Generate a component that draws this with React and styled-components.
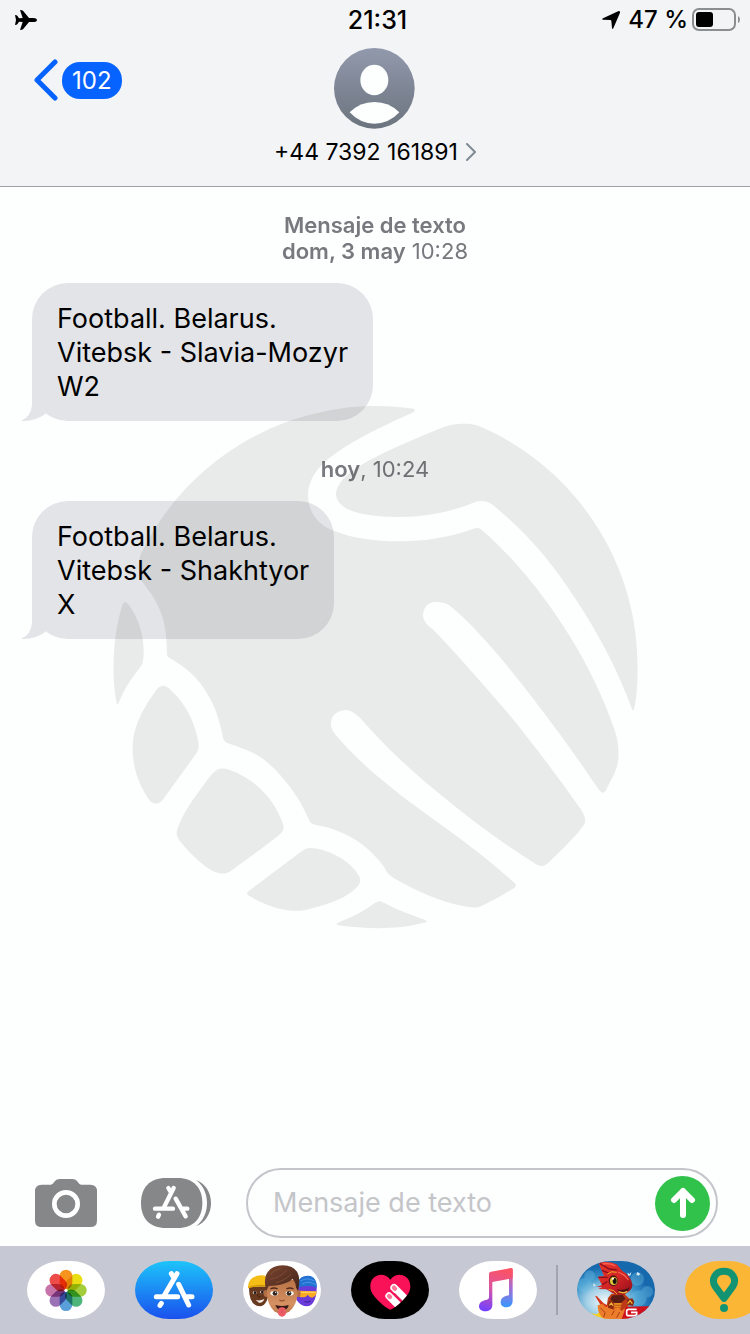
import React from "react";
import styled, { createGlobalStyle } from "styled-components";

const messages = [
  {
    id: 1,
    service: "Mensaje de texto",
    day: "dom, 3 may",
    time: " 10:28",
    lines: ["Football. Belarus.", "Vitebsk - Slavia-Mozyr", "W2"],
  },
  {
    id: 2,
    day: "hoy",
    time: ", 10:24",
    lines: ["Football. Belarus.", "Vitebsk - Shakhtyor", "X"],
  },
];

const PlaneIcon = () => (
  <svg width="22" height="20" viewBox="0 0 66 60" aria-hidden="true">
    <path d="M66 30Q65 36 55 36H42L24 58Q22 60 15 60L23 36L12 35L7 43Q5 45 0 45L3 30L0 15Q5 15 7 17L12 25L23 24L15 0Q22 0 24 2L42 24H55Q65 24 66 30Z" />
  </svg>
);

const LocationIcon = () => (
  <svg width="18" height="18" viewBox="0 0 54 54" aria-hidden="true">
    <path d="M50 0Q55 0 54 5L34 52Q31 56 30 51L28 29Q27 27 25 27L3 26Q-2 25 3 22Z" />
  </svg>
);

const BatteryIcon = () => (
  <svg width="48" height="23" viewBox="0 0 48 23" aria-hidden="true">
    <rect x="1" y="1" width="42" height="21" rx="6" fill="none" stroke="#8c8d8f" strokeWidth="2" />
    <rect x="4" y="4" width="17" height="15" rx="3" />
    <path d="M46 8Q48 9 48 11.500Q48 14 46 15Z" fill="#8c8d8f" />
  </svg>
);

const BackIcon = () => (
  <svg width="26" height="42" viewBox="0 0 26 42" aria-hidden="true">
    <path d="M23 3L5 21L23 39" fill="none" stroke="#0763ff" strokeWidth="5" strokeLinecap="round" strokeLinejoin="round" />
  </svg>
);

const ContactIcon = () => (
  <svg width="81" height="81" viewBox="0 0 243 243" aria-hidden="true">
    <defs>
      <linearGradient id="avatar" x1="0" y1="0" x2="0" y2="1">
        <stop offset="0" stopColor="#9199ac" />
        <stop offset="1" stopColor="#6c747f" />
      </linearGradient>
    </defs>
    <circle cx="121" cy="121" r="121" fill="url(#avatar)" />
    <ellipse cx="121" cy="96" rx="42" ry="46" fill="#fdfefe" />
    <path d="M47 193Q78 162 121 162Q165 162 196 193Q165 227 121 227Q78 227 47 193Z" fill="#fdfefe" />
  </svg>
);

const ChevronIcon = () => (
  <svg width="10" height="18" viewBox="0 0 10 18" aria-hidden="true">
    <path d="M1 1L9 9L1 17" fill="none" stroke="#808b96" strokeWidth="2" strokeLinecap="round" />
  </svg>
);

const TailIcon = () => (
  <svg width="30" height="44" viewBox="0 0 90 132" aria-hidden="true">
    <path d="M33 0V84Q31 118 0 132Q43 133 73 111L90 60V0Z" fill="#e5e5e8" />
  </svg>
);

const HandshakeMark = () => (
  <svg viewBox="36 44 1470 1464" aria-hidden="true">
    <g fill="#e9ebea">
      <path d="M868 50C884 52 886 57 874 63C780 105 700 145 655 180C605 215 582 255 582 295C585 350 615 380 665 397C710 415 770 423 840 423C910 423 975 412 1040 390C1055 384 1062 384 1072 394C1130 445 1190 510 1245 585C1330 700 1395 820 1440 950C1452 985 1452 1010 1451 1030C1448 1065 1435 1080 1418 1116C1413 1130 1405 1130 1396 1118C1310 990 1220 870 1130 760C1080 700 1030 645 985 608C970 595 955 593 940 593C918 593 905 608 904 630C905 650 920 660 930 668C1000 740 1060 810 1130 890C1210 985 1280 1080 1345 1172C1357 1190 1361 1203 1356 1215C1335 1245 1300 1280 1255 1323C1243 1333 1235 1335 1222 1328C1130 1270 1040 1205 950 1130C870 1065 800 1000 730 920C715 903 700 895 687 895C660 897 646 912 646 935C648 955 660 966 672 979C730 1045 800 1102 870 1155C960 1222 1065 1292 1155 1375C1166 1384 1167 1389 1158 1394C1130 1412 1100 1428 1070 1443C1055 1450 1040 1449 1020 1445C950 1432 880 1400 820 1365C805 1355 800 1345 795 1335C760 1285 710 1250 660 1232C635 1222 615 1220 598 1215C590 1212 588 1210 585 1203C560 1145 530 1105 490 1062C450 1020 420 1010 360 989C350 985 346 982 344 972C330 900 310 860 280 820C255 787 225 768 197 751C189 746 187 745 187 735C186 670 178 635 160 600C148 575 135 560 117 535C108 520 104 500 113 460A733 733 0 0 1 868 50Z" />
      <path d="M1010 94C1040 92 1058 97 1072 105C1330 220 1505 480 1505 770C1505 820 1502 860 1496 888C1493 900 1491 898 1486 885C1440 755 1360 620 1280 510C1220 430 1160 370 1098 320C1082 308 1065 308 1050 313C980 343 905 355 835 355C770 355 725 348 690 332C670 320 660 305 660 290C662 268 680 245 700 230C760 185 860 145 950 108C970 100 990 95 1010 94Z" />
      <path d="M63 598C67 592 72 592 78 598C110 640 122 690 122 735C121 755 120 765 113 774C90 805 70 830 52 875C49 883 47 883 45 870C30 780 38 680 63 598Z" />
      <path d="M160 836C170 825 180 825 190 832C240 875 265 930 275 985C277 1000 275 1010 267 1020L180 1140C165 1162 150 1162 136 1145C105 1100 90 1050 91 1000C92 940 120 890 160 836Z" />
      <path d="M310 1078C328 1058 340 1056 360 1062C440 1090 490 1150 512 1215C516 1228 513 1234 505 1242C460 1280 420 1305 370 1343C350 1357 335 1355 315 1346C275 1322 245 1290 220 1257C212 1245 213 1235 220 1218C240 1170 275 1125 310 1078Z" />
      <path d="M565 1290C580 1280 590 1281 605 1283C655 1293 700 1320 722 1355C731 1370 729 1376 722 1388C695 1420 640 1440 575 1455C520 1465 465 1445 415 1414C410 1410 410 1408 416 1402Z" />
      <path d="M770 1435C780 1429 784 1429 795 1435C830 1455 870 1468 910 1483C918 1487 915 1490 905 1491C830 1512 740 1508 668 1498C659 1496 660 1494 668 1490C705 1475 740 1458 770 1435Z" />
    </g>
  </svg>
);

const CameraIcon = () => (
  <svg width="62" height="48" viewBox="0 0 186 144" aria-hidden="true">
    <path d="M20 17H48Q54 15 58 8Q63 0 73 0H113Q123 0 128 8Q132 15 138 17H166Q186 17 186 37V125Q186 144 166 144H20Q0 144 0 125V37Q0 17 20 17Z" fill="#868789" />
    <circle cx="93" cy="75" r="35" fill="none" stroke="#fff" strokeWidth="14" />
  </svg>
);

const AppsIcon = () => (
  <svg width="70" height="50" viewBox="0 0 210 150" aria-hidden="true">
    <path d="M75 0H110C158 0 184 30 184 75S158 150 110 150H75C25 150 0 120 0 75S25 0 75 0Z" fill="#868789" />
    <path d="M165 6C193 16 210 43 210 75S193 134 165 145C186 129 198 104 198 75S186 22 165 6Z" fill="#868789" />
    <g fill="none" stroke="#fff" strokeWidth="13" strokeLinecap="round">
      <path d="M98 30L69 88M82 30L89 42M42 92H96M121 92H139M104 62L134 115M54 110L51 116" />
    </g>
  </svg>
);

const SendIcon = () => (
  <svg width="26" height="32" viewBox="0 0 26 32" aria-hidden="true">
    <path d="M13 4V28M4 13L13 4L22 13" fill="none" stroke="#fff" strokeWidth="6" strokeLinecap="round" strokeLinejoin="round" />
  </svg>
);

const petals = ["#f7941e", "#e9dd14", "#a4cd3c", "#4fb67b", "#5a9fd9", "#9a72b5", "#c573a8", "#ee4c48"];

const PhotosArt = () => (
  <svg viewBox="0 0 234 174" aria-hidden="true">
    <rect width="234" height="174" fill="#fff" />
    {petals.map((color, i) => (
      <rect
        key={color}
        x="98"
        y="26"
        width="38"
        height="58"
        rx="19"
        fill={color}
        transform={`rotate(${i * 45} 117 88)`}
        style={{ mixBlendMode: "multiply" }}
      />
    ))}
    <circle cx="117" cy="88" r="4" fill="#fff" />
  </svg>
);

const StoreArt = () => (
  <svg viewBox="0 0 234 174" aria-hidden="true">
    <defs>
      <linearGradient id="store" x1="0" y1="0" x2="0" y2="1">
        <stop offset="0" stopColor="#1dc4fa" />
        <stop offset="1" stopColor="#1a50ee" />
      </linearGradient>
    </defs>
    <rect width="234" height="174" fill="url(#store)" />
    <g fill="none" stroke="#fff" strokeWidth="15" strokeLinecap="round">
      <path d="M126 38L89 101M109 38L117 51M64 107H128M153 107H171M131 70L161 132M79 127L75 133" />
    </g>
  </svg>
);

const MemojiArt = () => (
  <svg viewBox="0 0 234 174" aria-hidden="true">
    <defs>
      <linearGradient id="skin" x1="0" y1="0" x2="0" y2="1">
        <stop offset="0" stopColor="#b87246" />
        <stop offset="0.7" stopColor="#d59162" />
        <stop offset="1" stopColor="#bd774b" />
      </linearGradient>
      <linearGradient id="hair" x1="0" y1="0" x2="1" y2="1">
        <stop offset="0" stopColor="#7b4530" />
        <stop offset="1" stopColor="#43241a" />
      </linearGradient>
    </defs>
    <rect width="234" height="174" fill="#fff" />
    <path d="M18 76Q17 136 52 136Q76 134 80 76Z" fill="#67391f" />
    <path d="M15 82Q13 46 54 43Q74 43 84 60V80Q50 72 15 82Z" fill="#f5bd16" />
    <path d="M17 80Q44 68 80 77" fill="none" stroke="#d79608" strokeWidth="4" />
    <path d="M38 117Q50 121 64 114Q59 127 48 125Z" fill="#f3ece6" />
    <ellipse cx="35" cy="95" rx="6" ry="4" fill="#e9e1db" />
    <ellipse cx="57" cy="93" rx="6" ry="4" fill="#e9e1db" />
    <circle cx="36" cy="95" r="4" fill="#201313" />
    <circle cx="58" cy="93" r="4" fill="#201313" />
    <path d="M44 99Q43 109 52 107" fill="none" stroke="#432311" strokeWidth="3" />
    <path d="M160 66Q199 47 221 74Q222 130 193 136Q174 136 160 116Z" fill="#6a3bd8" />
    <path d="M164 65Q172 40 203 45Q224 54 221 80Q198 70 164 80Z" fill="#2371d1" />
    <path d="M172 60Q192 48 213 59M177 69Q198 58 219 71" fill="none" stroke="#4796e8" strokeWidth="3" />
    <path d="M164 89L221 91Q221 107 207 110Q199 109 194 101Q188 112 170 108Z" fill="#f9aa22" />
    <path d="M168 94H218" stroke="#ffd35c" strokeWidth="4" />
    <path d="M185 122Q193 125 202 121" fill="none" stroke="#3b1c91" strokeWidth="3" />
    <ellipse cx="70" cy="97" rx="8" ry="11" fill="#b36e43" />
    <ellipse cx="165" cy="97" rx="8" ry="11" fill="#b36e43" />
    <path d="M72 56V103Q75 134 94 151Q117 168 140 151Q160 134 163 103V56Z" fill="url(#skin)" />
    <path d="M70 90Q62 63 69 42Q82 13 119 13Q151 14 163 34Q174 53 165 90L159 80Q158 62 148 53Q135 71 77 75Z" fill="url(#hair)" />
    <path d="M82 55Q112 50 131 28M98 65Q129 57 144 40M81 41Q92 26 113 22" fill="none" stroke="#8d573c" strokeWidth="2" />
    <path d="M82 84Q93 78 104 84M130 84Q141 78 152 84" fill="none" stroke="#562c1d" strokeWidth="4" />
    <ellipse cx="94" cy="97" rx="12" ry="7" fill="#f8f4ef" />
    <ellipse cx="140" cy="97" rx="12" ry="7" fill="#f8f4ef" />
    <circle cx="96" cy="97" r="7" fill="#30251f" />
    <circle cx="138" cy="97" r="7" fill="#30251f" />
    <circle cx="98" cy="94" r="2" fill="#fff" />
    <circle cx="140" cy="94" r="2" fill="#fff" />
    <path d="M109 117Q117 122 125 117" fill="none" stroke="#945231" strokeWidth="4" />
    <path d="M97 132Q117 138 137 132Q136 146 117 149Q101 146 97 132Z" fill="#37191a" />
    <path d="M107 142Q117 136 127 142L129 157Q128 166 117 167Q106 166 105 157Z" fill="#ed5d65" />
    <path d="M117 144V157" stroke="#c9424f" strokeWidth="2" />
  </svg>
);

const heart = "M118 146Q104 141 82 119C64 101 58 91 58 75C58 42 99 29 118 56C137 29 178 42 178 75C178 91 172 101 154 119Q132 141 118 146Z";

const TouchArt = () => (
  <svg viewBox="0 0 234 174" aria-hidden="true">
    <defs>
      <clipPath id="heart">
        <path d={heart} />
      </clipPath>
    </defs>
    <rect width="234" height="174" fill="#000" />
    <path d={heart} fill="#fa1259" />
    <g clipPath="url(#heart)">
      <path d="M129 80L174 125M114 105L160 151" stroke="#fff" strokeWidth="22" strokeLinecap="round" />
      <path d="M130 96L158 124" stroke="#ce0b48" strokeWidth="3" />
    </g>
    <path d="M129 80L132 83M114 105L117 108" stroke="#fb7898" strokeWidth="13" strokeLinecap="round" />
  </svg>
);

const MusicArt = () => (
  <svg viewBox="0 0 234 174" aria-hidden="true">
    <defs>
      <linearGradient id="noteLeft" gradientUnits="userSpaceOnUse" x1="115" y1="22" x2="80" y2="150">
        <stop offset="0" stopColor="#fb5264" />
        <stop offset="0.45" stopColor="#db56a1" />
        <stop offset="1" stopColor="#7240ff" />
      </linearGradient>
      <linearGradient id="noteRight" x1="0" y1="0" x2="0" y2="1">
        <stop offset="0" stopColor="#f8566b" />
        <stop offset="0.5" stopColor="#a66cd5" />
        <stop offset="1" stopColor="#3599ff" />
      </linearGradient>
    </defs>
    <rect width="234" height="174" fill="#fff" />
    <path d="M150 24L161 23V119C161 134 150 139 141 139C130 139 125 132 125 124C125 110 137 105 150 103Z" fill="url(#noteRight)" />
    <path d="M90 38Q90 33 96 32L156 21Q161 20 161 26V52L100 63V132C100 145 90 151 78 151C66 151 60 144 60 136C60 123 72 118 84 116Q90 115 90 109Z" fill="url(#noteLeft)" />
  </svg>
);

const DragonArt = () => (
  <svg viewBox="0 0 234 174" aria-hidden="true">
    <defs>
      <radialGradient id="sky" cx="0.36" cy="0.7" r="0.6">
        <stop offset="0" stopColor="#f4fafb" />
        <stop offset="0.4" stopColor="#a2cfe6" />
        <stop offset="0.7" stopColor="#3b94c9" />
        <stop offset="1" stopColor="#1769ad" />
      </radialGradient>
      <linearGradient id="scales" x1="0" y1="0" x2="1" y2="1">
        <stop offset="0" stopColor="#e8372b" />
        <stop offset="0.55" stopColor="#d12525" />
        <stop offset="1" stopColor="#8e0b1a" />
      </linearGradient>
    </defs>
    <rect width="234" height="174" fill="url(#sky)" />
    <g fill="#74c4e7" opacity="0.35">
      <circle cx="38" cy="44" r="16" />
      <circle cx="23" cy="73" r="22" />
      <circle cx="181" cy="54" r="20" />
      <circle cx="211" cy="92" r="17" />
      <circle cx="185" cy="112" r="24" />
    </g>
    <path d="M151 35L158 39L163 32L161 42L154 46ZM181 33L190 38L185 44L178 41ZM48 67L57 72L50 77Z" fill="#d2e9f0" />
    <path d="M36 174L42 157L58 160L70 152L92 160L130 154L155 174Z" fill="#f4d11f" />
    <path d="M103 98H142L156 112L152 150L134 166H104L88 142L93 111Z" fill="#bd3c17" />
    <path d="M107 103L137 102L146 113L132 126H111L99 114Z" fill="#5a1b14" />
    <path d="M110 126H134L129 146H113Z" fill="#e98c20" />
    <path d="M113 133H132M114 140H130" stroke="#a13a14" strokeWidth="2" />
    <path d="M54 104L60 106L80 127L95 135L91 145L73 136Z" fill="#d8361c" />
    <path d="M62 133L76 128L87 139L98 132L109 147L122 138L134 150L143 142Q146 166 135 174H81Q61 160 62 133Z" fill="#eb7d2b" />
    <path d="M70 140L84 155L80 168M112 149L104 163M128 153L119 170" fill="none" stroke="#a93c17" strokeWidth="3" />
    <path d="M95 120L105 119L112 133L107 145L93 140ZM149 115L166 112L172 122L168 135L152 132Z" fill="#8a2a12" />
    <path d="M97 133L103 126L109 135M152 128L159 119L166 128" fill="none" stroke="#f1b036" strokeWidth="4" />
    <path d="M58 78L75 72L62 47L81 45L66 10L70 4Q99 0 119 10L136 30Q160 42 166 69Q167 83 157 90L142 101Q114 104 98 91L88 85L63 84L76 79Z" fill="url(#scales)" />
    <path d="M69 8L97 24L119 27M75 28L96 37M64 49L92 49M75 72L91 61" fill="none" stroke="#8c0d1b" strokeWidth="4" />
    <path d="M77 9Q99 5 115 15M124 34Q143 39 154 57" fill="none" stroke="#fa6653" strokeWidth="4" />
    <path d="M91 39Q104 28 119 34M95 85Q113 86 120 99" fill="none" stroke="#edab27" strokeWidth="3" />
    <ellipse cx="109" cy="59" rx="14" ry="16" fill="#4b1614" />
    <ellipse cx="110" cy="60" rx="11" ry="12" fill="#e6c73b" />
    <ellipse cx="113" cy="60" rx="6" ry="9" fill="#17120e" />
    <circle cx="108" cy="53" r="3" fill="#fff" />
    <path d="M119 84Q138 92 158 79L150 93L139 98Q126 95 119 84Z" fill="#4a1014" />
    <path d="M125 92Q139 99 151 91" fill="none" stroke="#f4b63a" strokeWidth="4" />
    <path d="M147 137L234 135V174H134Z" fill="#cf111c" />
    <path d="M179 145H155Q149 145 149 151V158Q149 164 155 164H173Q179 164 179 159V154H162" fill="none" stroke="#fff" strokeWidth="5" />
  </svg>
);

const PinArt = () => (
  <svg viewBox="0 0 234 174" aria-hidden="true">
    <rect width="234" height="174" fill="#fcb636" />
    <path d="M117 112L91 77C77 55 91 31 117 31C143 31 157 55 143 77Z" fill="none" stroke="#129473" strokeWidth="21" strokeLinejoin="round" />
    <circle cx="117" cy="141" r="12" fill="#129473" />
  </svg>
);

const drawerApps = [
  { name: "Fotos", Art: PhotosArt },
  { name: "App Store", Art: StoreArt },
  { name: "Memoji", Art: MemojiArt },
  { name: "Digital Touch", Art: TouchArt },
  { name: "Música", Art: MusicArt },
];

const moreApps = [
  { name: "Dragon", Art: DragonArt },
  { name: "Pin", Art: PinArt },
];

const DrawerItem = ({ name, Art }) => (
  <AppButton type="button" aria-label={name}>
    <Art />
  </AppButton>
);

const App = () => {
  return (
    <>
      <GlobalStyle />
      <Screen>
        <Header>
          <StatusBar>
            <PlaneIcon />
            <Clock>21:31</Clock>
            <StatusRight>
              <LocationIcon />
              <span>47 %</span>
              <BatteryIcon />
            </StatusRight>
          </StatusBar>
          <Contact>
            <BackButton type="button" aria-label="Volver, 102 mensajes">
              <BackIcon />
              <UnreadBadge>102</UnreadBadge>
            </BackButton>
            <ContactButton type="button">
              <ContactIcon />
              <ContactName>
                +44 7392 161891
                <ChevronIcon />
              </ContactName>
            </ContactButton>
          </Contact>
        </Header>

        <Thread>
          <Watermark>
            <HandshakeMark />
          </Watermark>
          {messages.map((message) => (
            <Message key={message.id}>
              <Stamp>
                {message.service && <strong>{message.service}</strong>}
                <span>
                  <strong>{message.day}</strong>
                  {message.time}
                </span>
              </Stamp>
              <Bubble>
                {message.lines.join("\n")}
                <Tail>
                  <TailIcon />
                </Tail>
              </Bubble>
            </Message>
          ))}
        </Thread>

        <Composer onSubmit={(e) => e.preventDefault()}>
          <ToolButton type="button" aria-label="Cámara">
            <CameraIcon />
          </ToolButton>
          <ToolButton type="button" aria-label="Apps">
            <AppsIcon />
          </ToolButton>
          <Field>
            <TextInput type="text" aria-label="Mensaje de texto" placeholder="Mensaje de texto" />
            <SendButton type="submit" aria-label="Enviar">
              <SendIcon />
            </SendButton>
          </Field>
        </Composer>

        <Drawer aria-label="Apps">
          {drawerApps.map((app) => (
            <DrawerItem key={app.name} {...app} />
          ))}
          <DrawerGroup>
            {moreApps.map((app) => (
              <DrawerItem key={app.name} {...app} />
            ))}
          </DrawerGroup>
        </Drawer>
      </Screen>
    </>
  );
};

const GlobalStyle = createGlobalStyle`
  * {
    box-sizing: border-box;
  }

  body {
    margin: 0;
    background: #fdfefe;
    color: #000;
    font-family: Inter, "Liberation Sans", sans-serif;
  }

  button,
  input {
    padding: 0;
    border: 0;
    background: none;
    color: inherit;
    font: inherit;
  }

  button {
    cursor: pointer;
  }

  svg {
    display: block;
    flex-shrink: 0;
  }
`;

const Screen = styled.div`
  display: flex;
  flex-direction: column;
  min-height: 100vh;
  overflow: hidden;
`;

const Header = styled.header`
  background: #f3f4f6;
  border-bottom: 1px solid #a0a1a4;
`;

const StatusBar = styled.div`
  display: grid;
  grid-template-columns: 1fr auto 1fr;
  align-items: center;
  height: 39px;
  padding: 0 10px 0 15px;
  font-size: 24px;
  font-weight: 500;
`;

const Clock = styled.time`
  font-size: 25px;
`;

const StatusRight = styled.div`
  display: flex;
  align-items: center;
  justify-content: flex-end;
  gap: 4px;

  svg:first-child {
    margin-right: 4px;
  }
`;

const Contact = styled.div`
  display: grid;
  grid-template-columns: 1fr auto 1fr;
  align-items: start;
  padding: 9px 32px 20px;
`;

const BackButton = styled.button`
  display: flex;
  align-items: center;
  justify-self: start;
  gap: 4px;
  margin-top: 11px;
`;

const UnreadBadge = styled.span`
  padding: 0 10px;
  border-radius: 18px;
  background: #0763ff;
  color: #fff;
  font-size: 24px;
  line-height: 37px;
`;

const ContactButton = styled.button`
  display: flex;
  flex-direction: column;
  align-items: center;
  gap: 9px;
`;

const ContactName = styled.span`
  display: flex;
  align-items: center;
  gap: 8px;
  font-size: 23px;
  line-height: 28px;
`;

const Thread = styled.main`
  position: relative;
  flex: 1;
  padding: 25px 32px;
  background: #fdfefe;
  isolation: isolate;
`;

const Watermark = styled.div`
  position: absolute;
  z-index: -1;
  top: 219px;
  left: 0;
  right: 0;

  svg {
    width: 525px;
    margin: 0 auto;
  }
`;

const Message = styled.section`
  margin-bottom: 35px;
  mix-blend-mode: multiply;
`;

const Stamp = styled.header`
  display: flex;
  flex-direction: column;
  align-items: center;
  margin-bottom: 19px;
  color: #78797e;
  font-size: 22px;
  line-height: 26px;
  white-space: pre;

  strong {
    font-weight: 600;
  }
`;

const Bubble = styled.p`
  position: relative;
  width: fit-content;
  margin: 0;
  padding: 19px 25px 17px;
  border-radius: 36px;
  background: #e5e5e8;
  font-size: 27px;
  line-height: 34px;
  white-space: pre-line;
`;

const Tail = styled.span`
  position: absolute;
  left: -11px;
  bottom: 0;
  z-index: -1;
`;

const Composer = styled.form`
  display: flex;
  align-items: center;
  padding: 8px 32px 8px 35px;
`;

const ToolButton = styled.button`
  flex-shrink: 0;

  & + & {
    margin: 0 35px 0 44px;
  }
`;

const Field = styled.div`
  display: flex;
  flex: 1;
  align-items: center;
  min-width: 0;
  height: 70px;
  padding: 0 6px 0 25px;
  border: 2px solid #c4c5ca;
  border-radius: 35px;
`;

const TextInput = styled.input`
  flex: 1;
  width: 100%;
  min-width: 0;
  outline: none;
  font-size: 27px;
  line-height: 34px;

  &::placeholder {
    color: #c4c5c9;
    opacity: 1;
  }
`;

const SendButton = styled.button`
  display: flex;
  flex-shrink: 0;
  align-items: center;
  justify-content: center;
  width: 55px;
  height: 55px;
  border-radius: 50%;
  background: #30c24b;
`;

const Drawer = styled.nav`
  display: flex;
  gap: 30px;
  padding: 15px 0 15px 27px;
  background: #c6c9d3;
  overflow: hidden;
`;

const DrawerGroup = styled.div`
  display: flex;
  gap: 30px;
  margin-left: -11px;

  &::before {
    content: "";
    width: 2px;
    height: 50px;
    margin: 4px -11px 0 0;
    background: #a2a4ae;
  }
`;

const AppButton = styled.button`
  flex-shrink: 0;
  width: 78px;
  height: 58px;
  border-radius: 34px / 29px;
  overflow: hidden;

  svg {
    width: 100%;
    isolation: isolate;
  }
`;

export default App;
